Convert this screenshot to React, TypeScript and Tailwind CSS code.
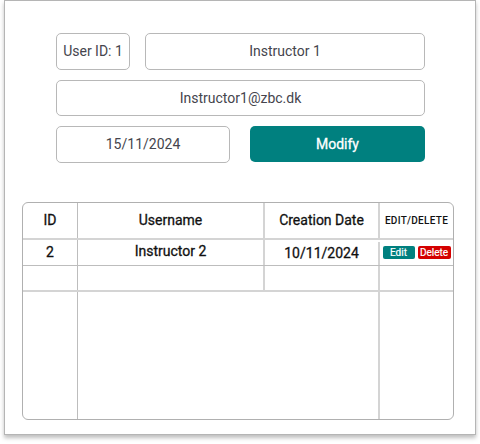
export default function App() {
    const rows = [{ id: 2, username: 'Instructor 2', created: '10/11/2024' }];

    return (
        <div className="w-[480px] h-[444px] bg-white font-['Roboto',sans-serif]">
            <div className="ml-[4px] w-[472px] h-[435px] border border-[#b5b5b5] bg-white shadow-[0_3px_4px_rgba(0,0,0,0.25)] flex flex-col">
                {/* form */}
                <div className="ml-[51px] mt-[32px] w-[369px] flex flex-col gap-[10px] text-[14px] text-[#45454d]">
                    <div className="flex gap-[15px]">
                        <div className="w-[74px] h-[37px] border border-[#b8b8b8] rounded-[5px] flex items-center justify-center">
                            User ID: 1
                        </div>
                        <div className="flex-1 h-[37px] border border-[#b8b8b8] rounded-[5px] flex items-center justify-center">
                            Instructor 1
                        </div>
                    </div>
                    <div className="h-[36px] border border-[#b8b8b8] rounded-[5px] flex items-center justify-center">
                        Instructor1@zbc.dk
                    </div>
                    <div className="grid grid-cols-[174px_175px] gap-[20px]">
                        <div className="h-[37px] border border-[#b8b8b8] rounded-[5px] flex items-center justify-center">
                            15/11/2024
                        </div>
                        <button className="h-[36px] rounded-[5px] bg-[#00807f] text-white [-webkit-text-stroke:0.3px_white]">Modify</button>
                    </div>
                </div>

                {/* table */}
                <div className="ml-[17px] mt-[39px] w-[432px] h-[218px] border border-[#b0b0b0] rounded-[6px] overflow-hidden flex flex-col text-[#111] [-webkit-text-stroke:0.3px_#111]">
                    <div className="grid grid-cols-[55px_187px_115px_1fr] h-[37px] border-b-2 border-[#d4d4d4] text-[14px]">
                        <div className="border-r border-[#bdbdbd] flex items-center justify-center">ID</div>
                        <div className="border-r-2 border-[#d4d4d4] flex items-center justify-center">Username</div>
                        <div className="border-r-2 border-[#d4d4d4] flex items-center justify-center">Creation Date</div>
                        <div className="flex items-center justify-center text-[10px] tracking-[0.3px] font-medium [-webkit-text-stroke:0px]">EDIT/DELETE</div>
                    </div>
                    {rows.map((row) => (
                        <div key={row.id} className="grid grid-cols-[55px_187px_115px_1fr] h-[26px] border-b border-[#bdbdbd] text-[14px]">
                            <div className="border-r border-[#bdbdbd] flex items-center justify-center">{row.id}</div>
                            <div className="border-r-2 border-[#d4d4d4] flex items-center justify-center -mt-[2px]">{row.username}</div>
                            <div className="border-r-2 border-[#d4d4d4] flex items-center justify-center mt-[2px]">{row.created}</div>
                            <div className="flex items-center justify-center gap-[3px] [-webkit-text-stroke:0.2px_white]">
                                <span className="w-[32px] h-[13px] rounded-[2px] bg-[#00807f] text-white text-[10px] leading-[13px] text-center">Edit</span>
                                <span className="w-[33px] h-[13px] rounded-[2px] bg-[#d40000] text-white text-[10px] leading-[13px] text-center">Delete</span>
                            </div>
                        </div>
                    ))}
                    <div className="grid grid-cols-[55px_187px_115px_1fr] h-[26px] border-b-2 border-[#d4d4d4]">
                        <div className="border-r border-[#bdbdbd]" />
                        <div className="border-r-2 border-[#d4d4d4]" />
                        <div className="border-r-2 border-[#d4d4d4]" />
                        <div />
                    </div>
                    <div className="flex-1 grid grid-cols-[55px_302px_1fr]">
                        <div className="border-r border-[#bdbdbd]" />
                        <div className="border-r-2 border-[#d4d4d4]" />
                        <div />
                    </div>
                </div>
            </div>
        </div>
    );
}
